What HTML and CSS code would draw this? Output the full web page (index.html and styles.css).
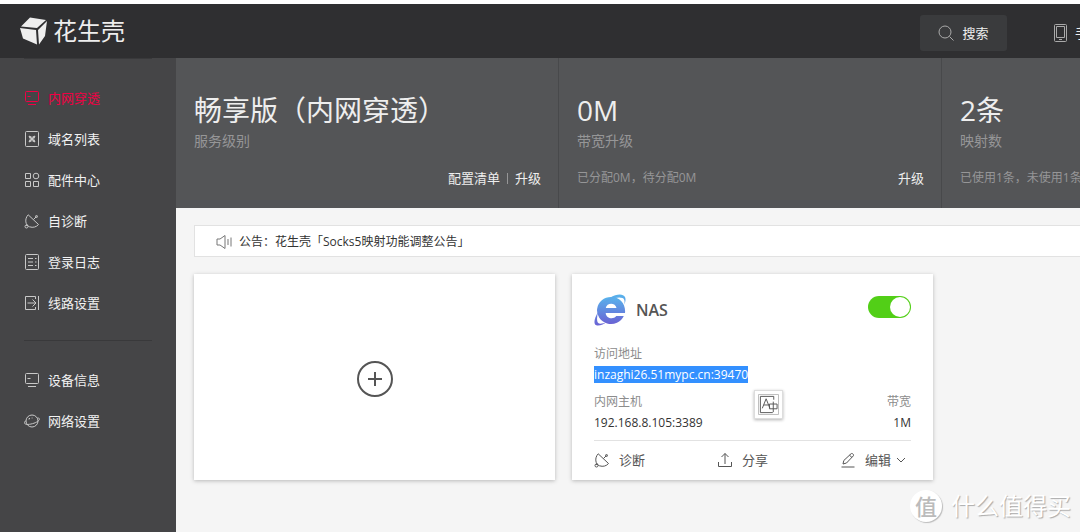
FILE: index.html
```html
<!DOCTYPE html>
<html lang="zh-CN">
<head>
<meta charset="utf-8">
<meta name="viewport" content="width=device-width, initial-scale=1">
<title>花生壳</title>
<link rel="stylesheet" href="styles.css">
</head>
<body>
<svg class="sprite" aria-hidden="true">
  <symbol id="i-screen" viewBox="0 0 16 16"><rect x="1.500" y="1.500" width="13" height="10" rx="1"/><path d="M3.500 6.500h3M4 14.500h8"/></symbol>
  <symbol id="i-dish" viewBox="0 0 16 16"><path d="M4.200 1.800C.2 6 1.500 12.500 5.500 13.800c3.500 1.200 7 .2 9-2.300zM9.500 6.500l3-3M3 11.500l-1 1.500"/><circle cx="12.500" cy="3.500" r="1"/><circle cx="2.500" cy="13.500" r="1.500"/></symbol>
</svg>
<header class="topbar">
  <a class="brand" href="#">
    <svg class="cube" viewBox="0 0 28 28" aria-hidden="true"><path d="M1 9.500 10 .5l16 2.500-9 8zM0 11l16 2 1 14.500-14-6zM18 13l9-9-2 15-6 8.500z"/></svg>
    <span>花生壳</span>
  </a>
  <nav class="tools">
    <button class="search" type="button">
      <svg class="ico" viewBox="0 0 16 16" aria-hidden="true"><circle cx="7" cy="7" r="6"/><path d="m11.500 11.500 4 4"/></svg>
      搜索
    </button>
    <a class="mobile" href="#">
      <svg class="phone" viewBox="0 0 14 18" aria-hidden="true"><rect x="1.500" y=".5" width="12" height="17" rx="1"/><path d="M3.500 2.500h8v11h-8zM6 15.500h3"/></svg>
      手机版
    </a>
  </nav>
</header>
<div class="layout">
  <aside class="sidebar">
    <ul class="menu">
      <li><a class="active" href="#"><svg class="ico"><use href="#i-screen"/></svg>内网穿透</a></li>
      <li><a href="#"><svg class="ico" viewBox="0 0 16 16"><rect x="1.500" y=".5" width="13" height="15" rx="1"/><path d="m5 5 6 6M11 5l-6 6M5.500 5l2.500 1.500L10.500 5M5.500 11 8 9.500l2.500 1.500M5 5.500 6.500 8 5 10.500M11 5.500 9.500 8l1.500 2.500"/></svg>域名列表</a></li>
      <li><a href="#"><svg class="ico" viewBox="0 0 16 16"><path d="M1.500 1.500h5v5h-5zM1.500 9.500h5v5h-5zM9.500 9.500h5v5h-5z"/><circle cx="12" cy="4" r="2.800"/></svg>配件中心</a></li>
      <li><a href="#"><svg class="ico"><use href="#i-dish"/></svg>自诊断</a></li>
      <li><a href="#"><svg class="ico" viewBox="0 0 16 16"><rect x="1.500" y=".5" width="13" height="15" rx="1"/><path d="M4 4.500h5M11 4.500h1.500M4 8h5M11 8h1.500M4 11.500h5M11 11.500h1.500"/></svg>登录日志</a></li>
      <li><a href="#"><svg class="ico" viewBox="0 0 16 16"><path d="M11.500 4V1.500h-10v13h10V12M14.500 1v14M3.500 8h8.500M8.500 4.500 12 8l-3.500 3.500"/></svg>线路设置</a></li>
    </ul>
    <ul class="menu">
      <li><a href="#"><svg class="ico"><use href="#i-screen"/></svg>设备信息</a></li>
      <li><a href="#"><svg class="ico" viewBox="0 0 16 16"><circle cx="8" cy="8" r="6"/><path d="M13.500 5c4 0 1.500 3.500-3.500 5.200S-.2 12 .6 9.300C.9 8.300 2 7.500 2 7.500M6 5.500H5v1M8.500 5h-.8"/></svg>网络设置</a></li>
    </ul>
  </aside>
  <main class="main">
    <section class="stats">
      <div class="stat">
        <h2>畅享版（内网穿透）</h2>
        <p class="label">服务级别</p>
        <div class="stat-foot"><span></span><span class="links"><a href="#">配置清单</a><i></i><a href="#">升级</a></span></div>
      </div>
      <div class="stat">
        <h2>0M</h2>
        <p class="label">带宽升级</p>
        <div class="stat-foot"><span>已分配0M，待分配0M</span><a href="#">升级</a></div>
      </div>
      <div class="stat">
        <h2>2条</h2>
        <p class="label">映射数</p>
        <div class="stat-foot"><span>已使用1条，未使用1条</span><a href="#">升级</a></div>
      </div>
    </section>
    <div class="content">
      <a class="notice" href="#">
        <svg class="ico" viewBox="0 0 16 16" aria-hidden="true"><path d="M1 5h3l5-3.500v13L4 11H1zM12 5v6M15 3.500v9"/></svg>
        公告：花生壳「Socks5映射功能调整公告」
      </a>
      <div class="cards">
        <button class="card add" type="button" aria-label="添加映射">
          <svg viewBox="0 0 36 36" aria-hidden="true"><circle cx="18" cy="18" r="17"/><path d="M18 11v14M11 18h14"/></svg>
        </button>
        <article class="card service">
          <div class="head">
            <svg class="ie" viewBox="0 0 32 32" aria-hidden="true">
              <defs><linearGradient id="blue" x1="0" y1="0" x2="0" y2="1"><stop offset="0" stop-color="#58b4ec"/><stop offset="1" stop-color="#6a62d4"/></linearGradient></defs>
              <path fill="url(#blue)" fill-rule="evenodd" d="M17 3a14 13.500 0 1 0 12.800 19h-7.500c-3 4-10.300 2.500-10.600-3H31C32 10 26 3 17 3zm-5.200 11c.7-5.500 9.700-6 10.700 0z"/>
              <path fill="url(#blue)" d="M6 12C14 2 28-3 31 3c1 2 .5 5-.8 7.500.8-3.500.3-5.500-1.700-6.500C24 2 15 5 6 12zM4 18C0 25-1 31 3 31.500c3 .5 7-1.500 10-3.500-4 1.500-7.500 2.500-9 .8C2.500 27 3 22 4 18z"/>
            </svg>
            <h3>NAS</h3>
            <input class="switch" type="checkbox" role="switch" aria-label="NAS" checked>
          </div>
          <p class="caption">访问地址</p>
          <p class="value"><mark>inzaghi26.51mypc.cn:39470</mark></p>
          <div class="pair caption"><span>内网主机</span><span>带宽</span></div>
          <div class="pair value"><span>192.168.8.105:3389</span><span>1M</span></div>
          <div class="actions">
            <button type="button"><svg class="ico"><use href="#i-dish"/></svg>诊断</button>
            <button type="button"><svg class="ico" viewBox="0 0 16 16"><path d="M1.500 10v4.500h13V10M8 12V1.500M4.500 5 8 1.500 11.500 5"/></svg>分享</button>
            <button type="button"><svg class="ico" viewBox="0 0 16 16"><path d="M1.500 15h13M3 12l.8-3.500L11 1.800c1-1 3.500.7 2.200 2.200L6.500 11zM9.500 3.200 12 5.500"/></svg><span>编辑<svg class="chev" viewBox="0 0 10 10"><path d="m1 3 4 4 4-4"/></svg></span></button>
          </div>
          <button class="translate" type="button" aria-label="翻译">
            <svg viewBox="0 0 22 22"><path class="frame" d="M.5.5h21v21H.5z"/><path d="M16.500 6V2.500h-14v17h13M4.500 15 8.500 5l4 10M6 11.500h5M12 10.500h8v5h-8zM16 8v11"/></svg>
          </button>
        </article>
      </div>
    </div>
  </main>
</div>
<div class="watermark"><b>值</b><span>什么值得买</span></div>
</body>
</html>
```
FILE: styles.css
```css
* { box-sizing: border-box; margin: 0; padding: 0; }
body {
  position: relative;
  display: flex;
  flex-direction: column;
  min-height: 100vh;
  padding-top: 4px;
  overflow: hidden;
  background: #fff;
  color: #333;
  font: 12px/20px "Open Sans", "Noto Sans CJK SC", sans-serif;
}
a { color: inherit; text-decoration: none; }
button { border: 0; background: none; color: inherit; font: inherit; cursor: pointer; }
ul { list-style: none; }
svg { fill: none; stroke: currentColor; flex: none; }
.sprite { position: absolute; width: 0; height: 0; }
.ico { width: 16px; height: 16px; }

.topbar {
  display: flex;
  align-items: center;
  justify-content: space-between;
  height: 54px;
  padding-left: 20px;
  background: #2f2f31;
  color: #eee;
}
.brand {
  display: flex;
  align-items: center;
  gap: 5px;
  font-size: 24px;
  font-weight: 400;
  line-height: 32px;
}
.cube { width: 28px; height: 28px; fill: #eee; stroke: none; }
.tools {
  display: flex;
  align-items: center;
  gap: 46px;
  width: 160px;
  padding-top: 4px;
  overflow: hidden;
  white-space: nowrap;
  font-size: 13px;
}
.search {
  display: flex;
  flex: none;
  align-items: center;
  justify-content: center;
  gap: 8px;
  width: 87px;
  height: 36px;
  border-radius: 3px;
  background: #3a3b3d;
}
.search svg, .mobile svg { color: #aaa; }
.mobile { display: flex; flex: none; align-items: center; gap: 8px; }
.phone { width: 14px; height: 18px; }

.layout { display: flex; flex: 1; }
.sidebar { flex: none; width: 176px; padding: 0 24px; background: #454547; color: #f2f2f2; }
.menu { border-top: 1px solid #39393b; padding: 18px 0 17px; }
.menu a { display: flex; align-items: center; gap: 8px; height: 41px; font-size: 13px; }
.menu .ico { color: #c8c8c8; }
.menu .active, .menu .active .ico { color: #f00044; }

.main { flex: 1; min-width: 0; background: #f5f5f5; }
.stats { display: flex; overflow: hidden; background: #545557; color: #eee; }
.stat { flex: none; width: 383px; height: 150px; padding: 33px 17px 0 18px; border-right: 1px solid #48494b; }
.stat h2 { font-size: 28px; font-weight: 400; line-height: 38px; }
.label { color: #969697; font-size: 14px; line-height: 24px; }
.stat-foot { display: flex; justify-content: space-between; padding-top: 15px; color: #969697; }
.stat-foot a { color: #eee; font-size: 13px; }
.links { display: flex; align-items: center; gap: 7px; }
.links i { width: 1px; height: 11px; background: #969697; }

.content { padding: 17px 0 0 18px; }
.notice {
  display: flex;
  align-items: center;
  gap: 7px;
  height: 32px;
  padding: 2px 0 0 21px;
  border: 1px solid #e2e2e2;
  border-right: 0;
  background: #fff;
}
.notice svg { color: #777; }
.cards { display: flex; flex-wrap: wrap; gap: 17px; padding-top: 17px; }
.card { width: 361px; height: 206px; background: #fff; box-shadow: 0 1px 4px rgba(0, 0, 0, .25); }
.add { display: flex; align-items: center; justify-content: center; padding-top: 3px; }
.add svg { width: 36px; height: 36px; color: #555; stroke-width: 2; }
.service { position: relative; padding: 20px 22px 0; }
.head { display: flex; align-items: center; gap: 10px; height: 32px; }
.ie { width: 32px; height: 32px; stroke: none; }
.head h3 { flex: 1; color: #555; font-size: 16px; font-weight: 600; }
.switch {
  appearance: none;
  align-self: flex-start;
  width: 43px;
  height: 22px;
  margin-top: 2px;
  padding: 1px;
  border-radius: 11px;
  background: #ccc;
}
.switch::before { content: ""; display: block; width: 20px; height: 20px; border-radius: 50%; background: #fff; }
.switch:checked { background: #52cf17; }
.switch:checked::before { margin-left: 21px; }
.caption { color: #8c8c8c; }
.head + .caption { padding-top: 18px; }
.pair { display: flex; justify-content: space-between; }
.value { line-height: 22px; }
.value + .pair { padding-top: 6px; }
mark { background: #3390ff; color: #fff; }
.actions {
  display: flex;
  justify-content: space-between;
  margin-top: 6px;
  padding: 9px 5px 0 0;
  border-top: 1px solid #e2e2e2;
  color: #555;
}
.actions button { display: flex; align-items: center; gap: 9px; font-size: 13px; }
.actions span { display: flex; align-items: center; gap: 5px; }
.actions .chev { width: 10px; height: 10px; }
.translate {
  position: absolute;
  top: 116px;
  left: 182px;
  width: 29px;
  height: 29px;
  padding: 3px;
  border: 1px solid #ddd;
  background: #fff;
  color: #555;
  box-shadow: 0 1px 3px rgba(0, 0, 0, .3);
}
.translate svg { display: block; width: 21px; height: 21px; }
.frame { stroke: #bbb; }

.watermark {
  position: absolute;
  right: 9px;
  bottom: 10px;
  display: flex;
  align-items: center;
  gap: 9px;
  color: #fff;
  font-size: 24px;
  line-height: 32px;
  text-shadow: 1px 1px 1px #aaa;
}
.watermark b {
  width: 32px;
  height: 32px;
  border-radius: 50%;
  background: #fff;
  color: #bbb;
  font-size: 22px;
  font-weight: 500;
  text-align: center;
  text-shadow: none;
  box-shadow: 1px 1px 1px #bbb;
}
```
